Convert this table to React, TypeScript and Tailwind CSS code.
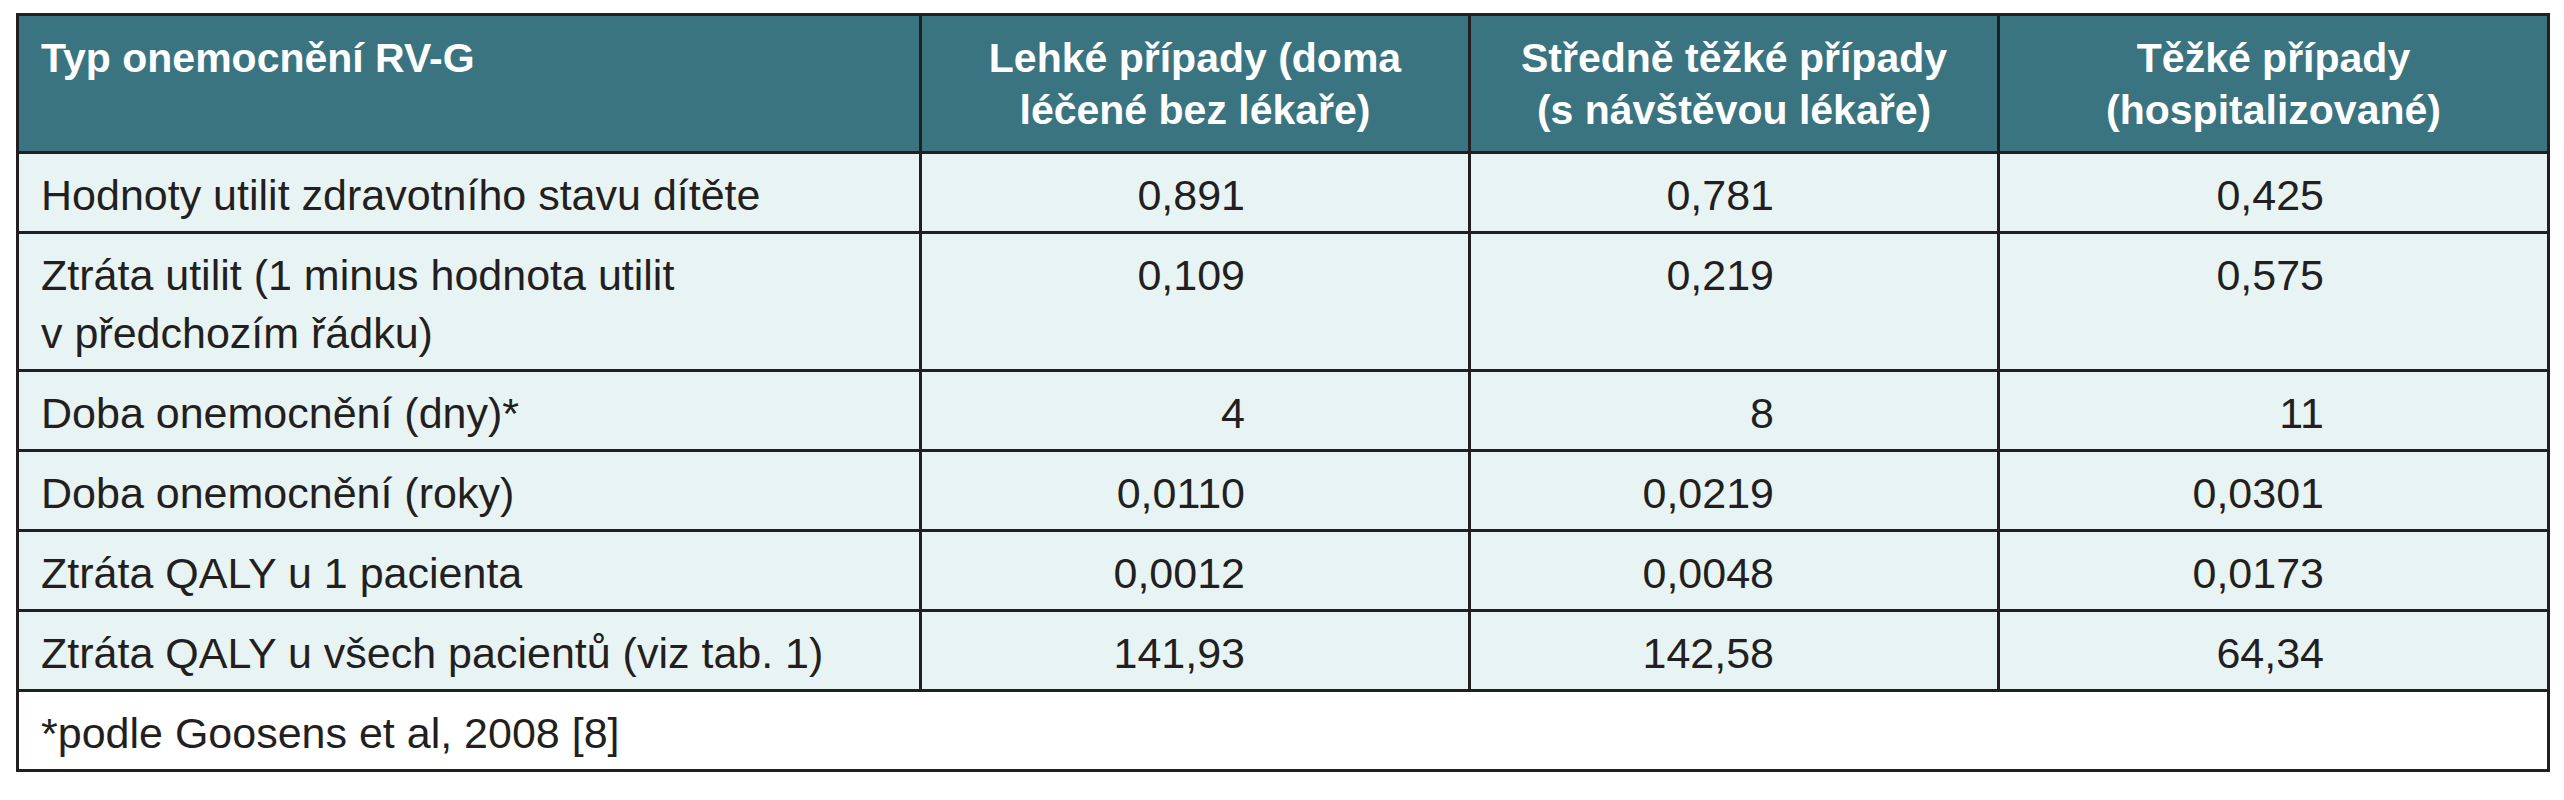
import React from "react";

// rows of the QALY table
const rows: { label: React.ReactNode; values: string[] }[] = [
  { label: "Hodnoty utilit zdravotního stavu dítěte", values: ["0,891", "0,781", "0,425"] },
  {
    label: (
      <>
        Ztráta utilit (1 minus hodnota utilit
        <br />v předchozím řádku)
      </>
    ),
    values: ["0,109", "0,219", "0,575"],
  },
  { label: "Doba onemocnění (dny)*", values: ["4", "8", "11"] },
  { label: "Doba onemocnění (roky)", values: ["0,0110", "0,0219", "0,0301"] },
  { label: "Ztráta QALY u 1 pacienta", values: ["0,0012", "0,0048", "0,0173"] },
  { label: "Ztráta QALY u všech pacientů (viz tab. 1)", values: ["141,93", "142,58", "64,34"] },
];

const headers = [
  ["Lehké případy (doma", "léčené bez lékaře)"],
  ["Středně těžké případy", "(s návštěvou lékaře)"],
  ["Těžké případy", "(hospitalizované)"],
];

export default function App() {
  return (
    <div className="min-h-screen bg-white pt-[13px] pl-[16px] font-['Liberation_Sans',Arial,sans-serif] text-[#231f20]">
      <table className="table-fixed w-[2531px] border-collapse border-[3px] border-[#231f20]">
        <colgroup>
          <col className="w-[903px]" />
          <col className="w-[549px]" />
          <col className="w-[529px]" />
          <col className="w-[550px]" />
        </colgroup>
        <thead>
          <tr className="bg-[#3a7480] text-white text-[41px] font-bold leading-[52px]">
            <th className="border-[3px] border-[#231f20] pl-[22px] pt-[16px] pb-[15px] text-left align-top font-bold">
              Typ onemocnění RV-G
            </th>
            {headers.map((h) => (
              <th
                key={h[0]}
                className="border-[3px] border-[#231f20] pt-[16px] pb-[15px] text-center align-top font-bold"
              >
                {h[0]}
                <br />
                {h[1]}
              </th>
            ))}
          </tr>
        </thead>
        <tbody className="text-[43px] leading-[58px]">
          {rows.map((r, i) => (
            <tr key={i} className="bg-[#e8f4f3]">
              <td className="border-[3px] border-[#231f20] pl-[22px] pt-[12px] pb-[7px] align-top">
                {r.label}
              </td>
              {r.values.map((v, j) => (
                <td
                  key={j}
                  className="border-[3px] border-[#231f20] pr-[223px] pt-[12px] pb-[7px] text-right align-top"
                >
                  {v}
                </td>
              ))}
            </tr>
          ))}
          <tr className="bg-white">
            <td colSpan={4} className="border-[3px] border-[#231f20] pl-[22px] pt-[12px] pb-[7px] align-top">
              *podle Goosens et al, 2008 [8]
            </td>
          </tr>
        </tbody>
      </table>
    </div>
  );
}
